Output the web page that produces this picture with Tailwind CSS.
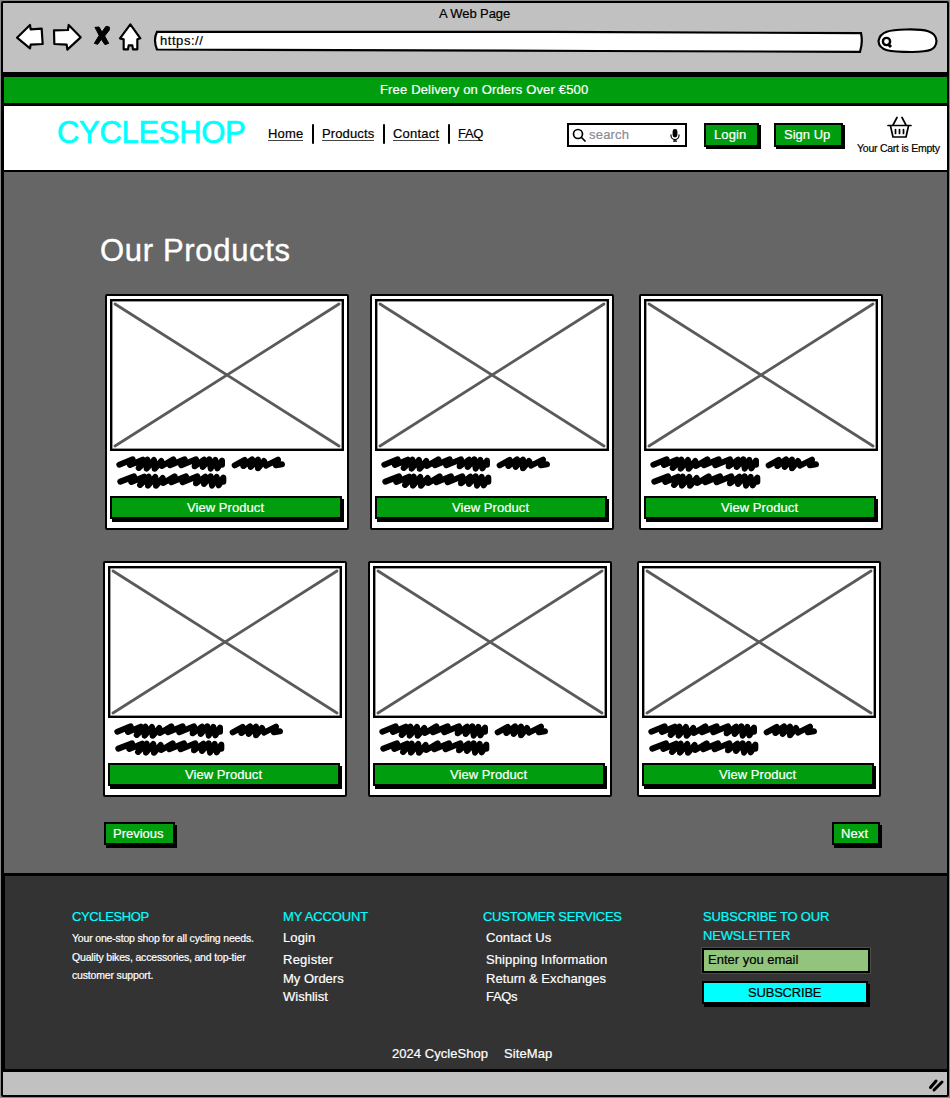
<!DOCTYPE html>
<html lang="en">
<head>
<meta charset="utf-8">
<title>A Web Page</title>
<script src="https://cdn.jsdelivr.net/npm/@tailwindcss/browser@4"></script>
</head>
<body class="w-[950px] h-[1098px] overflow-hidden bg-[#8a8a8a] font-['Liberation_Sans',sans-serif] text-[13px] leading-5 text-black whitespace-nowrap [-webkit-text-stroke:0.2px]">
<svg width="0" height="0" class="absolute">
  <symbol id="scribble" viewBox="0 0 520 100">
    <g fill="none" stroke="#000" stroke-width="18" stroke-linecap="round" stroke-linejoin="round">
      <path d="M10 26 L50 10 L42 27 L80 11 L68 36 L94 11 L92 38 L114 12 L116 38 L136 15 L138 30 L172 10 L162 28 L206 10 L196 28 L240 10 L236 31 L264 11 L260 33 L280 10 L284 38 L298 12 L304 37 L318 14 L318 26"/>
      <path d="M356 28 L386 12 L382 30 L408 10 L404 33 L426 11 L426 37 L444 15 L450 29 L486 11 L480 28 L498 25"/>
      <path d="M13 77 L54 61 L46 78 L84 62 L72 87 L98 62 L96 89 L118 63 L120 89 L140 66 L142 81 L176 61 L166 79 L210 61 L200 79 L244 61 L240 82 L268 62 L264 84 L284 61 L288 89 L302 63 L308 88 L322 65 L322 77"/>
    </g>
  </symbol>
</svg>
<div class="w-[948px] h-[1096px] ml-px mt-px border-2 border-black rounded-[2px] flex flex-col">
  <div class="h-[69px] bg-[#c1c1c1]">
    <div class="h-[20px] pl-[436px] leading-[22px] tracking-[-0.1px]">A Web Page</div>
    <div class="flex">
      <svg class="w-[147px] h-[34px]" viewBox="9 69 441 102" fill="#fff" stroke="#000" stroke-width="6.500" stroke-linejoin="round" stroke-linecap="round">
        <path d="M51 113 L90 75 L92 88 L125 86 L128 132 L92 134 L90 145Z"/>
        <path d="M242 112 L206 75 L204 90 L162 91 L163 132 L200 134 L202 149Z"/>
        <path d="M286 82 L297 81 L306 96 L318 79 L328 81 L328 90 L314 108 L326 130 L315 134 L304 118 L293 133 L283 130 L297 107Z" fill="#000" stroke-width="3"/>
        <path d="M391 73 L421 115 L412 118 L412 148 L399 148 L397 136 L386 136 L384 148 L371 148 L371 118 L360 115Z"/>
      </svg>
      <div class="relative w-[713px] h-[30px]">
        <svg class="absolute inset-0 w-[713px] h-[30px]" viewBox="150 23 713 30" fill="#fff" stroke="#000" stroke-width="2.200"><path d="M157 31.800 L550 31.8 L861 33.2 Q863 42 860 51.800 L600 51 L157 49.500 Q153 40 157 31.800Z"/></svg>
        <div class="relative pl-[10px] pt-[8px] tracking-[0.55px]">https://</div>
      </div>
      <svg class="ml-[12px] w-[64px] h-[34px]" viewBox="875 23 64 34" fill="#fff" stroke="#000" stroke-width="2.200"><path d="M878.5 41 C880 31 890 30 906 29.5 C925 29 936 31 936.5 41 C936 50 930 51.5 912 52 C890 52 879 51 878.5 41Z"/><circle cx="886.500" cy="41.500" r="3.600" stroke-width="2.400"/><path d="M888 44 L891 47" stroke-width="3"/></svg>
    </div>
  </div>
  <div class="h-[34px] border-l border-t-[5px] border-b-[3px] border-black bg-[#009e0f] text-white pl-[376px] leading-[26px] tracking-[0.16px]">Free Delivery on Orders Over €500</div>
  <div class="h-[66px] bg-white border-l border-b-2 border-black flex pt-[18px]">
    <div class="ml-[53px] w-[211px] -mt-[2px] text-[31px] leading-[22px] text-[#00ffff] tracking-[-0.32px] [-webkit-text-stroke:0.7px]">CYCLESHOP</div>
    <nav class="flex">
      <a class="w-[35px] h-[17px] border-b border-[#444] tracking-[0.2px]">Home</a>
      <i class="ml-[9px] mr-[8px] w-[2px] h-[20px] bg-black rounded"></i>
      <a class="w-[52px] h-[17px] border-b border-[#444] tracking-[0.12px]">Products</a>
      <i class="ml-[9px] mr-[8px] w-[2px] h-[20px] bg-black rounded"></i>
      <a class="w-[46px] h-[17px] border-b border-[#444] tracking-[0.22px]">Contact</a>
      <i class="ml-[9px] mr-[8px] w-[2px] h-[20px] bg-black rounded"></i>
      <a class="w-[25px] h-[17px] border-b border-[#444] tracking-[-0.3px]">FAQ</a>
    </nav>
    <div class="ml-[84px] -mt-px w-[120px] h-[24px] border-2 border-black flex text-[#8b8b95]">
      <svg class="ml-[3px] mt-[3px] w-[14px] h-[14px]" viewBox="0 0 14 14" fill="none" stroke="#000" stroke-width="1.700" stroke-linecap="round"><circle cx="6" cy="6" r="4.500"/><path d="M9.500 9.500 L13 13"/></svg>
      <div class="ml-[3px] w-[81px] tracking-[0.2px]">search</div>
      <svg class="mt-[4px] w-[10px] h-[13px]" viewBox="0 0 10 13"><rect x="2.600" y="0" width="4.800" height="8.500" rx="2.400"/><path d="M1 5.500 V6.500 A4 4 0 0 0 9 6.500 V5.500 M5 10 V12 M3 12.200 H7" fill="none" stroke="#000" stroke-width="1.200"/></svg>
    </div>
    <div class="ml-[17px] -mt-px w-[55px] h-[24px] mr-[15px] border-2 border-black bg-[#009e0f] text-white pl-[8px] shadow-[2px_2px_0_#000] tracking-[0.1px]">Login</div>
    <div class="-mt-px w-[69px] h-[24px] border-2 border-black bg-[#009e0f] text-white pl-[8px] shadow-[2px_2px_0_#000]">Sign Up</div>
    <div class="ml-[14px] -mt-[8px] text-[10.5px] leading-[14px]">
      <svg class="ml-[30px] w-[25px] h-[23px]" viewBox="0 0 25 23" fill="none" stroke="#000" stroke-width="1.700" stroke-linecap="round" stroke-linejoin="round"><path d="M1 9.500 H24 M3.500 10 L6 21 H19 L21.500 10 M6 9 L10 1.500 M19 9 L15 1.500 M8.500 13.500 V17.500 M12.500 13.500 V17.500 M16.500 13.500 V17.500"/></svg>
      <div class="mt-[2px] tracking-[-0.25px]">Your Cart is Empty</div>
    </div>
  </div>
  <main class="h-[701px] border-l border-black bg-[#666] pt-[62px]">
    <h1 class="ml-[96px] text-[31px] leading-[34px] text-white tracking-[0.67px] [-webkit-text-stroke:0.4px]">Our Products</h1>
    <div id="row1" class="flex ml-[101px] mt-[26px]"></div>
    <div id="row2" class="flex ml-[99px] mt-[31px]"></div>
    <div class="flex ml-[100px] mt-[25px] text-white">
      <div class="w-[71px] h-[23px] border-2 border-black bg-[#009e0f] pl-[7px] shadow-[2px_3px_0_#000]">Previous</div>
      <div class="ml-[657px] w-[48px] h-[23px] border-2 border-black bg-[#009e0f] pl-[7px] shadow-[2px_3px_0_#000] tracking-[0.1px]">Next</div>
    </div>
  </main>
  <footer class="h-[199px] bg-[#333] border-l-2 border-t-[3px] border-b-[3px] border-black text-white pt-[31px]">
    <div class="flex h-[137px]">
      <div class="ml-[67px] w-[211px]">
        <h2 class="text-[#00ffff] tracking-[-0.38px]">CYCLESHOP</h2>
        <div class="mt-[2px] text-[10.5px] leading-[18.5px] tracking-[-0.17px]">
          <div>Your one-stop shop for all cycling needs.</div>
          <div>Quality bikes, accessories, and top-tier</div>
          <div>customer support.</div>
        </div>
      </div>
      <div class="w-[200px]">
        <h2 class="text-[#00ffff] tracking-[-0.13px]">MY ACCOUNT</h2>
        <div class="mt-px tracking-[0.1px]">Login</div>
        <div class="mt-[2px] tracking-[0.25px]">Register</div>
        <div class="-mt-px leading-[19px]">My Orders</div>
        <div class="leading-[18px]">Wishlist</div>
      </div>
      <div class="w-[220px]">
        <h2 class="text-[#00ffff] tracking-[-0.27px]">CUSTOMER SERVICES</h2>
        <div class="pl-[3px]">
          <div class="mt-px tracking-[0.1px]">Contact Us</div>
          <div class="mt-[2px] tracking-[0.1px]">Shipping Information</div>
          <div class="-mt-px leading-[19px] tracking-[0.05px]">Return &amp; Exchanges</div>
          <div class="leading-[18px] tracking-[-0.3px]">FAQs</div>
        </div>
      </div>
      <div>
        <h2 class="text-[#00ffff] leading-[19px] tracking-[-0.16px]">SUBSCRIBE TO OUR<br>NEWSLETTER</h2>
        <div class="-ml-px mt-[3px] w-[168px] h-[25px] border-2 border-black bg-[#93c47d] text-black pl-[4px] shadow-[0_0_0_0.5px_#5d7650]">Enter you email</div>
        <div class="-ml-px mt-[8px] w-[166px] h-[23px] border-2 border-black bg-[#00ffff] text-black pl-[44px] shadow-[2px_3px_0_#000] tracking-[-0.2px]">SUBSCRIBE</div>
      </div>
    </div>
    <div class="flex pl-[387px] gap-[16px]"><div class="w-[96px] tracking-[0.05px]">2024 CycleShop</div><div class="tracking-[0.08px]">SiteMap</div></div>
  </footer>
  <div class="flex-1 bg-[#c1c1c1] flex justify-end">
    <svg class="w-[20px] h-[22px]" viewBox="927 1072 20 22" stroke="#000" stroke-width="3" stroke-linecap="round"><path d="M930.500 1087.500 L936 1081 M934 1090 L942 1082"/></svg>
  </div>
</div>
<template id="card">
  <div class="w-[244px] h-[236px] border-2 border-black rounded-[2px] bg-white p-[3px]">
    <svg class="w-[234px] h-[152px]" viewBox="0 0 234 152"><rect x="1.200" y="1.200" width="231.600" height="149.600" fill="#fff" stroke="#000" stroke-width="2.400"/><path d="M5 5 L229 147 M229 5 L5 147" stroke="#5a5a5a" stroke-width="2.800" stroke-linecap="round"/></svg>
    <svg class="ml-[6px] mt-[5px] w-[173px] h-[33px]" viewBox="0 0 519 99"><use href="#scribble" width="520" height="100"/></svg>
    <div class="mt-[7px] w-[232px] h-[23px] border-2 border-black bg-[#009e0f] text-white pl-[75px] shadow-[2px_3px_0_#000] tracking-[0.06px]">View Product</div>
  </div>
</template>
<script>
const card = document.getElementById('card');
for (const id of ['row1', 'row2']) {
  for (const gap of ['', 'ml-[21px]', 'ml-[25px]']) {
    const el = card.content.cloneNode(true).firstElementChild;
    if (gap) el.classList.add(gap);
    document.getElementById(id).append(el);
  }
}
</script>
</body>
</html>
